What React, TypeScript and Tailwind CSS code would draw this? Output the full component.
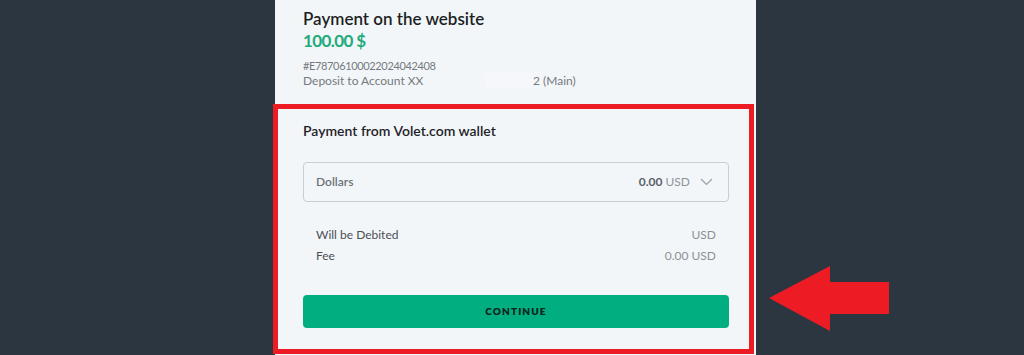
import React from "react";

export default function App() {
  return (
    <div
      className="relative w-[1024px] h-[355px] overflow-hidden bg-[#2b3640]"
      style={{ fontFamily: "Lato, 'Noto Sans', sans-serif" }}
    >
      <div className="ml-[275px] w-[481px] h-[355px] bg-[#f3f6f9]">
        {/* top section */}
        <div className="pl-[28px] pt-[8px] pb-[16px]">
          <div className="text-[17px] leading-[22px] font-semibold text-[#1c1f23]">
            Payment on the website
          </div>
          <div className="text-[17px] leading-[22px] font-bold tracking-[-0.6px] text-[#22aa7b]">
            100.00 $
          </div>
          <div className="mt-[6px] text-[11px] leading-[15px] tracking-[-0.35px] text-[#747a80]">
            #E78706100022024042408
          </div>
          <div className="flex text-[12px] leading-[15px] text-[#747a80]">
            <span className="w-[182px]">Deposit to Account XX</span>
            <span className="w-[48px] bg-[#f5f7fa]"></span>
            <span>2 (Main)</span>
          </div>
        </div>

        {/* payment block (highlighted) */}
        <div className="-ml-[2px] w-[481px] border-[5px] border-[#ed1c24] pl-[25px] pr-[20px] pt-[12px] pb-[21px]">
          <div className="text-[14px] leading-[20px] font-semibold text-[#1f2328]">
            Payment from Volet.com wallet
          </div>
          <div className="mt-[21px] h-[40px] rounded-[4px] border border-[#c9ced4] flex items-center px-[12px]">
            <span className="text-[12px] font-semibold text-[#6b7177]">Dollars</span>
            <span className="ml-auto text-[12px] text-[#8e949a]">
              <span className="font-bold text-[#5a6066]">0.00</span> USD
            </span>
            <svg
              className="ml-[10px] mr-[3px]"
              width="13"
              height="8"
              viewBox="0 0 13 8"
              fill="none"
            >
              <path d="M1 1l5.5 5.5L12 1" stroke="#9aa0a6" strokeWidth="1.2" />
            </svg>
          </div>
          <div className="mt-[25px] px-[13px] text-[12px] leading-[16px]">
            <div className="flex justify-between">
              <span className="text-[#4a4f55]">Will be Debited</span>
              <span className="text-[#8b9197]">USD</span>
            </div>
            <div className="mt-[5px] flex justify-between">
              <span className="text-[#4a4f55]">Fee</span>
              <span className="text-[#8b9197]">0.00 USD</span>
            </div>
          </div>
          <button className="mt-[31px] w-full h-[33px] rounded-[4px] bg-[#00ae80] flex items-center justify-center text-[10px] font-extrabold tracking-[1.1px] text-[#10231c]">
            CONTINUE
          </button>
        </div>
      </div>

      {/* annotation arrow */}
      <svg
        className="absolute left-[769px] top-[265px]"
        width="121"
        height="67"
        viewBox="0 0 121 67"
      >
        <polygon
          points="0,33 61,1 61,17 120,17 120,49 61,49 61,66"
          fill="#ed1c24"
        />
      </svg>
    </div>
  );
}
